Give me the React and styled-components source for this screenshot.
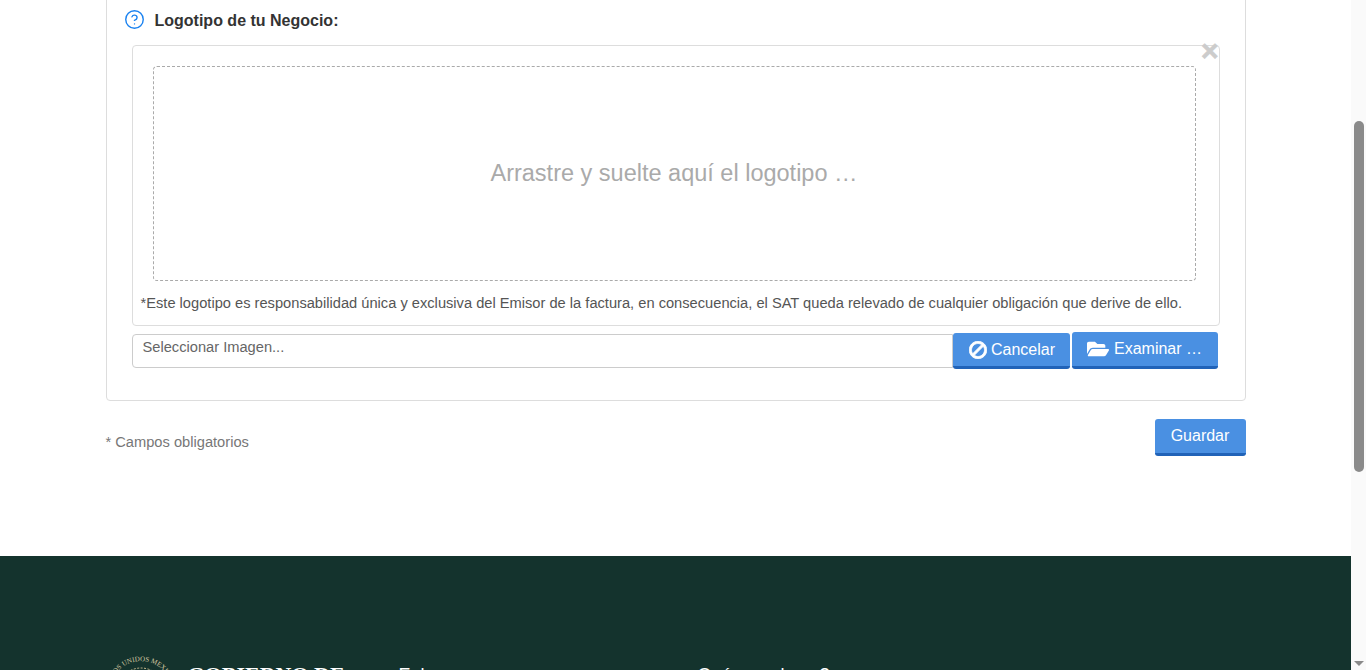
import React from 'react';
import styled, {createGlobalStyle} from 'styled-components';
import {CircleHelp} from 'lucide-react';
import {FaBan, FaFolderOpen} from 'react-icons/fa';

const GlobalStyle = createGlobalStyle`
    html, body {
        margin: 0;
        padding: 0;
        background: #fff;
        overflow: hidden;
    }

    * {
        box-sizing: border-box;
    }
`;

const Frame = styled.div`
    display: flex;
    height: 670px;
    overflow: hidden;
    font-family: "Liberation Sans", Arial, sans-serif;
`;

const Page = styled.div`
    flex: 1;
    min-width: 0;
`;

const Container = styled.div`
    width: 1140px;
    margin: 0 auto;
`;

const Panel = styled.section`
    margin-top: -20px;
    padding: 20px 25px 31px;
    border: 1px solid #ddd;
    border-radius: 4px;
`;

const PanelTitle = styled.h3`
    display: flex;
    align-items: center;
    gap: 10px;
    height: 40px;
    margin: 0 0 4px -8px;
    font-size: 16px;
    font-weight: bold;
    color: #333;
`;

const HelpIcon = styled(CircleHelp)`
    margin-bottom: 3px;
    color: #1a82f0;
`;

const UploadBox = styled.div`
    position: relative;
    padding: 20px 23px 0 20px;
    height: 281px;
    border: 1px solid #ddd;
    border-radius: 4px;
`;

const CloseMark = styled.span`
    position: absolute;
    top: -11px;
    right: 0;
    font-size: 30px;
    line-height: 32px;
    font-weight: bold;
    color: #ccc;
    -webkit-text-stroke: 0.7px #ccc;
`;

const DropZone = styled.div`
    display: flex;
    align-items: center;
    justify-content: center;
    height: 215px;
    border: 1px dashed #aaa;
    border-radius: 4px;
    font-size: 23.5px;
    color: #aaa;
`;

const Note = styled.p`
    margin: 14px 0 0 -12px;
    font-size: 14.67px;
    line-height: 16px;
    color: #555;
    white-space: nowrap;
`;

const InputRow = styled.div`
    display: flex;
    align-items: flex-end;
    height: 37px;
    margin-top: 6px;
    width: 1086px;
`;

const FileCaption = styled.div`
    flex: 1;
    height: 34px;
    margin-bottom: 1px;
    padding: 4px 10px;
    border: 1px solid #ccc;
    border-radius: 4px 0 0 4px;
    font-size: 14.67px;
    line-height: 16px;
    color: #666;
`;

const Button = styled.button`
    display: flex;
    align-items: center;
    justify-content: center;
    gap: ${props => props.$gap || 0}px;
    width: ${props => props.$width}px;
    height: ${props => props.$height}px;
    margin-left: ${props => props.$left || 0}px;
    padding: 0 0 ${props => props.$lift ?? 1}px;
    border: 0;
    border-bottom: 3px solid #2163b8;
    border-radius: 3px;
    background: #4a90e2;
    font-family: inherit;
    font-size: 16px;
    color: #fff;
`;

const BanIcon = styled(FaBan)`
    margin-left: 2px;
    transform: scaleX(-1);
`;

const FormFoot = styled.div`
    display: flex;
    justify-content: space-between;
    margin-top: 18px;
`;

const Required = styled.span`
    margin-top: 15px;
    font-size: 14.67px;
    line-height: 16px;
    color: #777;
`;

const Footer = styled.footer`
    height: 300px;
    margin-top: 100px;
    padding-top: 100px;
    background: #14332d;
`;

const FooterGrid = styled(Container)`
    display: grid;
    grid-template-columns: 293px 301px 301px 1fr;
`;

const Brand = styled.div`
    display: flex;
    gap: 12px;
`;

const SealMark = styled.svg`
    flex: none;
    margin-top: 1px;
    overflow: visible;
`;

const Wordmark = styled.div`
    margin-top: 5px;
    font-family: "Liberation Serif", serif;
    font-size: 22px;
    line-height: 28px;
    font-weight: bold;
    color: #fff;
`;

const FooterHeading = styled.div`
    margin-top: ${props => props.$top || 8}px;
    margin-left: ${props => props.$shift || 0}px;
    font-size: ${props => props.$size || 18}px;
    line-height: 22px;
    color: #fff;
    white-space: nowrap;
`;

const ScrollBar = styled.div`
    position: relative;
    width: 15px;
    padding: 121px 2px 0 3px;
    background: #fafafa;
`;

const ScrollThumb = styled.div`
    height: 351px;
    border-radius: 5px;
    background: #8a8a8a;
`;

const ScrollArrow = styled.div`
    position: absolute;
    left: 3px;
    bottom: 4px;
    width: 0;
    height: 0;
    border-left: 5px solid transparent;
    border-right: 5px solid transparent;
    border-top: 5px solid #8a8a8a;
`;

const Seal = () => (
    <SealMark width="70" height="70" viewBox="0 0 70 70">
        <defs>
            <path id="sealArc" d="M35 66 A31 31 0 0 1 35 4 A31 31 0 0 1 35 66"/>
        </defs>
        <circle cx="35" cy="35" r="24" fill="none" stroke="#c9b98c" strokeWidth="1" strokeDasharray="2 1.5"/>
        <text fontFamily="Liberation Serif, serif" fontSize="7" fill="#d8cba4" textAnchor="middle">
            <textPath href="#sealArc" startOffset="50%">ESTADOS UNIDOS MEXICANOS</textPath>
        </text>
    </SealMark>
);

export default function App() {
    return (
        <Frame>
            <GlobalStyle/>
            <Page>
                <Container>
                    <Panel>
                        <PanelTitle>
                            <HelpIcon size={21} strokeWidth={1.6}/>
                            Logotipo de tu Negocio:
                        </PanelTitle>
                        <UploadBox>
                            <CloseMark>×</CloseMark>
                            <DropZone>Arrastre y suelte aquí el logotipo …</DropZone>
                            <Note>*Este logotipo es responsabilidad única y exclusiva del Emisor de la factura, en consecuencia, el SAT queda relevado de cualquier obligación que derive de ello.</Note>
                        </UploadBox>
                        <InputRow>
                            <FileCaption>Seleccionar Imagen...</FileCaption>
                            <Button $width={117} $height={36} $gap={4} $lift={0}>
                                <BanIcon size={18} stroke="currentColor" strokeWidth={24}/>
                                Cancelar
                            </Button>
                            <Button $width={146} $height={37} $gap={5} $left={2}>
                                <FaFolderOpen size={22}/>
                                Examinar …
                            </Button>
                        </InputRow>
                    </Panel>
                    <FormFoot>
                        <Required>* Campos obligatorios</Required>
                        <Button $width={91} $height={37}>Guardar</Button>
                    </FormFoot>
                </Container>
                <Footer>
                    <FooterGrid>
                        <Brand>
                            <Seal/>
                            <Wordmark>GOBIERNO DE<br/>MÉXICO</Wordmark>
                        </Brand>
                        <FooterHeading>Enlaces</FooterHeading>
                        <FooterHeading $shift={-13}>¿Qué es gob.mx?</FooterHeading>
                        <FooterHeading $shift={39} $size={16} $top={10}>Declaración de Accesibilidad</FooterHeading>
                    </FooterGrid>
                </Footer>
            </Page>
            <ScrollBar>
                <ScrollThumb/>
                <ScrollArrow/>
            </ScrollBar>
        </Frame>
    );
}
